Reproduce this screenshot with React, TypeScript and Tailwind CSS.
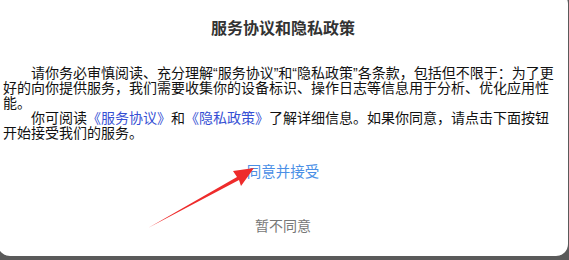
export default function App() {
    return (
        <div className="relative h-[260px] w-[569px] overflow-hidden bg-[#5a5a5a] font-['Liberation_Sans','Noto_Sans_CJK_SC',sans-serif]">
            <div className="ml-[-2px] mt-[-8px] flex h-[264px] w-[570px] flex-col items-center rounded-[12px] bg-white">
                <h1 className="mt-[27px] text-[16px] font-bold leading-[20px] text-[#333]">服务协议和隐私政策</h1>
                <div className="mt-[27px] w-full pl-[5px] pr-[12px] text-[14px] leading-[15px] text-[#111]">
                    <p className="indent-[28px]">
                        请你务必审慎阅读、充分理解“服务协议”和“隐私政策”各条款，包括但不限于：为了更好的向你提供服务，我们需要收集你的设备标识、操作日志等信息用于分析、优化应用性能。
                    </p>
                    <p className="indent-[28px]">
                        你可阅读<span className="text-[#3650d4]">《服务协议》</span>和<span className="text-[#3650d4]">《隐私政策》</span>了解详细信息。如果你同意，请点击下面按钮开始接受我们的服务。
                    </p>
                </div>
                <button className="mt-[20.5px] text-[14.5px] leading-[20px] text-[#4a8fe6]">同意并接受</button>
                <button className="mt-[34px] text-[14px] leading-[20px] text-[#777]">暂不同意</button>
            </div>
            {/* red arrow annotation */}
            <svg className="absolute left-0 top-0" width="569" height="260" viewBox="0 0 569 260">
                <polygon points="148,228 237,177 233,171 254,168 241,186 239,180" fill="#ee2b2b" />
            </svg>
        </div>
    )
}
